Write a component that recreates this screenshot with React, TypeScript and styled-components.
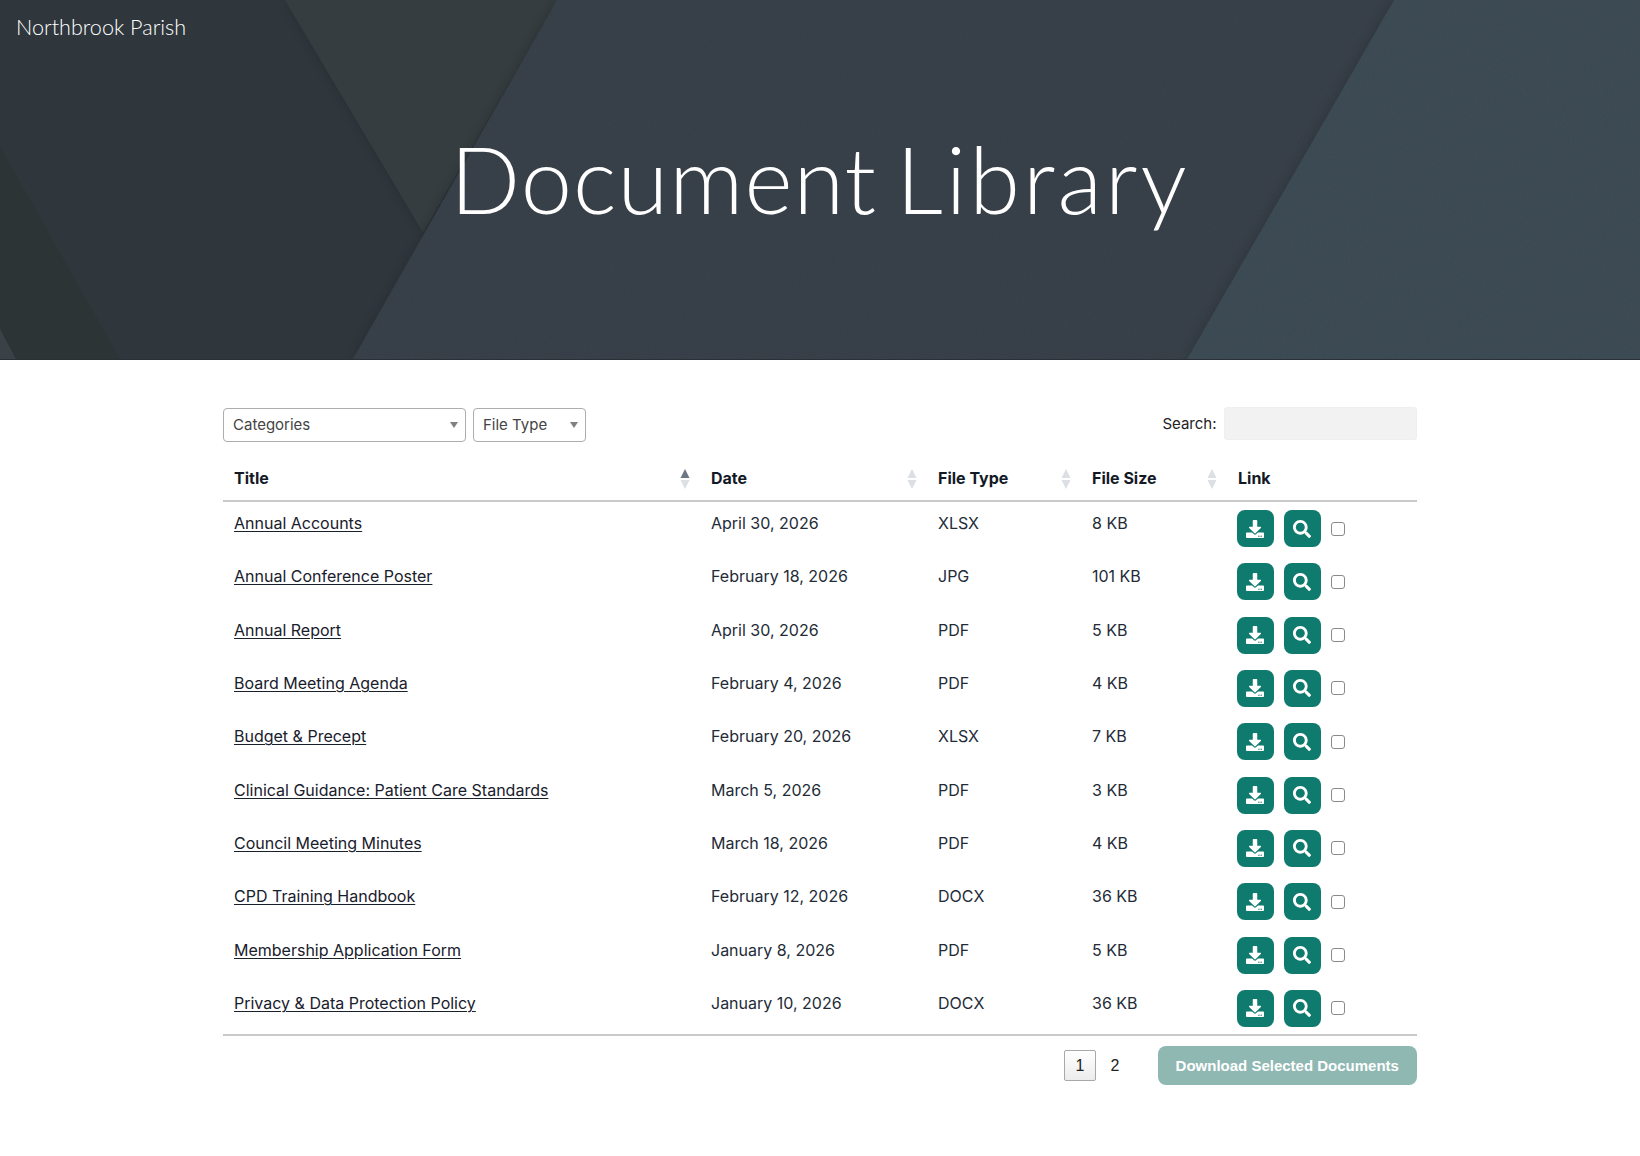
import React from 'react';
import styled, { createGlobalStyle } from 'styled-components';
import { FaDownload, FaSearch } from 'react-icons/fa';

type Doc = {
	title: string;
	date: string;
	type: string;
	size: string;
};

const docs: Doc[] = [
	{ title: 'Annual Accounts', date: 'April 30, 2026', type: 'XLSX', size: '8 KB' },
	{ title: 'Annual Conference Poster', date: 'February 18, 2026', type: 'JPG', size: '101 KB' },
	{ title: 'Annual Report', date: 'April 30, 2026', type: 'PDF', size: '5 KB' },
	{ title: 'Board Meeting Agenda', date: 'February 4, 2026', type: 'PDF', size: '4 KB' },
	{ title: 'Budget & Precept', date: 'February 20, 2026', type: 'XLSX', size: '7 KB' },
	{ title: 'Clinical Guidance: Patient Care Standards', date: 'March 5, 2026', type: 'PDF', size: '3 KB' },
	{ title: 'Council Meeting Minutes', date: 'March 18, 2026', type: 'PDF', size: '4 KB' },
	{ title: 'CPD Training Handbook', date: 'February 12, 2026', type: 'DOCX', size: '36 KB' },
	{ title: 'Membership Application Form', date: 'January 8, 2026', type: 'PDF', size: '5 KB' },
	{ title: 'Privacy & Data Protection Policy', date: 'January 10, 2026', type: 'DOCX', size: '36 KB' },
];

const COLUMNS = '477px 227px 154px 146px 189.5px';

const GlobalStyle = createGlobalStyle`
	html, body {
		margin: 0;
		padding: 0;
		background: #fff;
	}
	body {
		font-family: Inter, "Liberation Sans", sans-serif;
		color: #1b2330;
		overflow: hidden;
	}
`;

const Hero = styled.header`
	position: relative;
	height: 360px;
	background: #2f373d;
	overflow: hidden;
	border-bottom: 1px solid #2a3036;
	box-sizing: border-box;
`;

const HeroArt = styled.svg`
	position: absolute;
	inset: 0;
	width: 100%;
	height: 100%;
`;

const SiteName = styled.div`
	position: absolute;
	top: 12px;
	left: 16px;
	font-family: Lato, sans-serif;
	font-weight: 300;
	font-size: 21.6px;
	line-height: 30px;
	color: #fff;
`;

const HeroTitle = styled.h1`
	position: relative;
	margin: 0;
	padding-top: 124px;
	text-align: center;
	font-family: Lato, sans-serif;
	font-weight: 300;
	font-size: 92px;
	line-height: 110px;
	word-spacing: -6px;
	color: #fff;
`;

const TitleWord = styled.span<{ $tracking: number }>`
	letter-spacing: ${p => p.$tracking}px;
`;

const Content = styled.main`
	width: 1193.5px;
	margin-left: 223px;
	padding-top: 48px;
`;

const Toolbar = styled.div`
	display: flex;
	align-items: center;
	height: 34px;
`;

const Filters = styled.div`
	display: flex;
	gap: 7px;
`;

const SelectBox = styled.div<{ $width: number }>`
	position: relative;
	width: ${p => p.$width}px;
	height: 34px;
	box-sizing: border-box;
	padding-left: 9px;
	border: 1.5px solid #adadad;
	border-radius: 4px;
	font-size: 15px;
	line-height: 31px;
	color: #444;
	&::after {
		content: '';
		position: absolute;
		top: 13px;
		right: 7px;
		border-left: 4.5px solid transparent;
		border-right: 4.5px solid transparent;
		border-top: 6px solid #808080;
	}
`;

const SearchLabel = styled.label`
	display: flex;
	align-items: center;
	gap: 7px;
	margin: 0 0 3px auto;
	font-size: 15px;
	color: #222;
`;

const SearchInput = styled.div`
	width: 193px;
	height: 33px;
	box-sizing: border-box;
	background: #f2f2f2;
	border: 1px solid #efefef;
	border-radius: 3px;
`;

const Row = styled.div`
	display: grid;
	grid-template-columns: ${COLUMNS};
`;

const HeadRow = styled(Row)`
	height: 53px;
	margin-top: 7px;
	box-sizing: border-box;
	border-bottom: 2px solid #c9c9c9;
`;

const HeadCell = styled.div`
	position: relative;
	padding-left: 11px;
	font-size: 16px;
	font-weight: 700;
	line-height: 58px;
	color: #131a26;
`;

const SortIcon = styled.svg`
	position: absolute;
	top: 20px;
	right: 10px;
	width: 10px;
	height: 20px;
`;

const BodyRow = styled(Row)`
	height: 53.33px;
`;

const Cell = styled.div`
	padding: 9px 11px 0;
	font-size: 16px;
	line-height: 24px;
	color: #232b37;
`;

const DocLink = styled.a`
	color: #18202c;
	text-decoration: underline;
	text-underline-offset: 2px;
	text-decoration-thickness: 1px;
`;

const Actions = styled.div`
	display: flex;
	align-self: start;
	align-items: center;
	gap: 10px;
	padding: 8px 0 0 10px;
`;

const IconButton = styled.a`
	display: flex;
	align-items: center;
	justify-content: center;
	width: 37px;
	height: 37px;
	padding-right: 1px;
	box-sizing: border-box;
	border-radius: 8px;
	background: #0f7a6e;
	color: #fff;
	font-size: 18px;
`;

const Tick = styled.span`
	width: 14px;
	height: 14px;
	box-sizing: border-box;
	border: 1.5px solid #8a8a8a;
	border-radius: 3px;
	background: #fff;
`;

const Footer = styled.div`
	display: flex;
	align-items: center;
	justify-content: flex-end;
	margin-top: -1px;
	padding-top: 10px;
	border-top: 2px solid #c9c9c9;
`;

const PageNumber = styled.span<{ $current?: boolean }>`
	display: flex;
	align-items: center;
	justify-content: center;
	width: 32px;
	height: 31px;
	margin-right: 3px;
	box-sizing: border-box;
	font-family: "Liberation Sans", sans-serif;
	font-size: 16px;
	color: #222;
	${p =>
		p.$current &&
		`
		border: 1px solid #a8a8a8;
		border-radius: 2px;
		background: linear-gradient(#fff, #ececec);
	`}
`;

const DownloadAll = styled.button`
	width: 258.5px;
	height: 39px;
	margin-left: 24px;
	padding: 0;
	border: 0;
	border-radius: 8px;
	background: #8fb8b3;
	color: #fff;
	font-family: "Liberation Sans", sans-serif;
	font-size: 15px;
	font-weight: 700;
`;

const Sort = ({ active }: { active?: boolean }) => (
	<SortIcon viewBox="0 0 10 20">
		<path d="M5 0 9.5 9H.5Z" fill={active ? '#6c7685' : '#dcdfe3'} />
		<path d="M5 20 9.5 11H.5Z" fill="#dcdfe3" />
	</SortIcon>
);

const HeroBackground = () => (
	<HeroArt viewBox="0 0 1640 360" preserveAspectRatio="none">
		<defs>
			<filter id="soft" x="-10%" y="-10%" width="120%" height="120%">
				<feDropShadow dx="0" dy="0" stdDeviation="7" floodColor="#000" floodOpacity="0.2" />
			</filter>
			<filter id="paper" x="0" y="0" width="100%" height="100%">
				<feTurbulence type="fractalNoise" baseFrequency="0.7" numOctaves="2" seed="4" result="grain" />
				<feColorMatrix in="grain" values="0 0 0 0 0  0 0 0 0 0  0 0 0 0 0  0.5 0 0 0 -0.18" result="tint" />
				<feComposite in="tint" in2="SourceAlpha" operator="in" />
			</filter>
		</defs>
		<polygon points="0,147 120,360 0,360" fill="#2c3436" />
		<polygon points="0,330 16,360 0,360" fill="#3a4248" />
		<polygon points="285,0 557,0 423,233" fill="#363e40" filter="url(#soft)" />
		<polygon points="557,0 1394,0 1187,360 353,360" fill="#394148" filter="url(#soft)" />
		<polygon points="1394,0 1640,0 1640,360 1187,360" fill="#3c4b54" filter="url(#soft)" />
		<polygon points="557,0 1640,0 1640,360 353,360" filter="url(#paper)" opacity="0.15" />
	</HeroArt>
);

const headers = ['Title', 'Date', 'File Type', 'File Size'];

export default function App() {
	return (
		<>
			<GlobalStyle />
			<Hero>
				<HeroBackground />
				<SiteName>Northbrook Parish</SiteName>
				<HeroTitle>
					<TitleWord $tracking={1.1}>Document</TitleWord> <TitleWord $tracking={3}>Library</TitleWord>
				</HeroTitle>
			</Hero>
			<Content>
				<Toolbar>
					<Filters>
						<SelectBox $width={243}>Categories</SelectBox>
						<SelectBox $width={113}>File Type</SelectBox>
					</Filters>
					<SearchLabel>
						Search:
						<SearchInput />
					</SearchLabel>
				</Toolbar>
				<HeadRow>
					{headers.map((h, i) => (
						<HeadCell key={h}>
							{h}
							<Sort active={i === 0} />
						</HeadCell>
					))}
					<HeadCell>Link</HeadCell>
				</HeadRow>
				{docs.map(doc => (
					<BodyRow key={doc.title}>
						<Cell>
							<DocLink href="#">{doc.title}</DocLink>
						</Cell>
						<Cell>{doc.date}</Cell>
						<Cell>{doc.type}</Cell>
						<Cell>{doc.size}</Cell>
						<Actions>
							<IconButton>
								<FaDownload />
							</IconButton>
							<IconButton>
								<FaSearch />
							</IconButton>
							<Tick />
						</Actions>
					</BodyRow>
				))}
				<Footer>
					<PageNumber $current>1</PageNumber>
					<PageNumber>2</PageNumber>
					<DownloadAll>Download Selected Documents</DownloadAll>
				</Footer>
			</Content>
		</>
	);
}
